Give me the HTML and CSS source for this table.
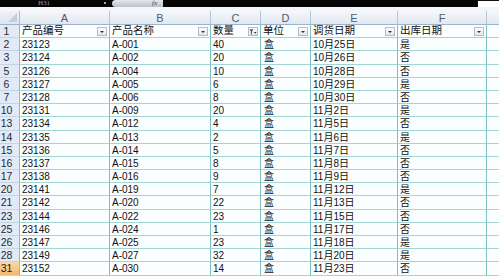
FILE: index.html
```html
<!DOCTYPE html>
<html lang="zh-CN">
<head>
<meta charset="utf-8">
<title>Sheet</title>
<link rel="stylesheet" href="styles.css">
</head>
<body>
<div class="topbar">
  <div class="bar-main">
    <span class="namebox">H31</span>
    <span class="dot"></span>
    <span class="fxpill"><span class="fx">fx</span></span>
  </div>
  <div class="bar-end"></div>
</div>
<div class="gap"></div>
<div class="sheet">
  <div class="corner"></div>
  <div class="ch">A</div><div class="ch">B</div><div class="ch">C</div><div class="ch">D</div><div class="ch">E</div><div class="ch">F</div><div class="ch last"></div>

  <div class="rh">1</div>
  <div class="c hd"><span>产品编号</span><span class="dd"></span></div>
  <div class="c hd"><span>产品名称</span><span class="dd"></span></div>
  <div class="c hd"><span>数量</span><span class="dd flt"><svg width="9" height="8" viewBox="0 0 9 8"><path d="M0.5 1 H5 L3.3 3.4 V6.5 L2.2 7 V3.4 Z" fill="#3a5a8c"/><path d="M5.5 4 H8.5 L7 5.8 Z" fill="#222"/></svg></span></div>
  <div class="c hd"><span>单位</span><span class="dd"></span></div>
  <div class="c hd"><span>调货日期</span><span class="dd"></span></div>
  <div class="c hd"><span>出库日期</span><span class="dd"></span></div>
  <div class="c last"></div>

  <div class="rh">2</div><div class="c">23123</div><div class="c">A-001</div><div class="c">40</div><div class="c u">盒</div><div class="c">10月25日</div><div class="c">是</div><div class="c last"></div>
  <div class="rh">3</div><div class="c">23124</div><div class="c">A-002</div><div class="c">20</div><div class="c u">盒</div><div class="c">10月26日</div><div class="c">否</div><div class="c last"></div>
  <div class="rh">5</div><div class="c">23126</div><div class="c">A-004</div><div class="c">10</div><div class="c u">盒</div><div class="c">10月28日</div><div class="c">否</div><div class="c last"></div>
  <div class="rh">6</div><div class="c">23127</div><div class="c">A-005</div><div class="c">6</div><div class="c u">盒</div><div class="c">10月29日</div><div class="c">是</div><div class="c last"></div>
  <div class="rh">7</div><div class="c">23128</div><div class="c">A-006</div><div class="c">8</div><div class="c u">盒</div><div class="c">10月30日</div><div class="c">否</div><div class="c last"></div>
  <div class="rh">10</div><div class="c">23131</div><div class="c">A-009</div><div class="c">20</div><div class="c u">盒</div><div class="c">11月2日</div><div class="c">是</div><div class="c last"></div>
  <div class="rh">13</div><div class="c">23134</div><div class="c">A-012</div><div class="c">4</div><div class="c u">盒</div><div class="c">11月5日</div><div class="c">否</div><div class="c last"></div>
  <div class="rh">14</div><div class="c">23135</div><div class="c">A-013</div><div class="c">2</div><div class="c u">盒</div><div class="c">11月6日</div><div class="c">是</div><div class="c last"></div>
  <div class="rh">15</div><div class="c">23136</div><div class="c">A-014</div><div class="c">5</div><div class="c u">盒</div><div class="c">11月7日</div><div class="c">否</div><div class="c last"></div>
  <div class="rh">16</div><div class="c">23137</div><div class="c">A-015</div><div class="c">8</div><div class="c u">盒</div><div class="c">11月8日</div><div class="c">否</div><div class="c last"></div>
  <div class="rh">17</div><div class="c">23138</div><div class="c">A-016</div><div class="c">9</div><div class="c u">盒</div><div class="c">11月9日</div><div class="c">否</div><div class="c last"></div>
  <div class="rh">20</div><div class="c">23141</div><div class="c">A-019</div><div class="c">7</div><div class="c u">盒</div><div class="c">11月12日</div><div class="c">是</div><div class="c last"></div>
  <div class="rh">21</div><div class="c">23142</div><div class="c">A-020</div><div class="c">22</div><div class="c u">盒</div><div class="c">11月13日</div><div class="c">否</div><div class="c last"></div>
  <div class="rh">23</div><div class="c">23144</div><div class="c">A-022</div><div class="c">23</div><div class="c u">盒</div><div class="c">11月15日</div><div class="c">否</div><div class="c last"></div>
  <div class="rh">25</div><div class="c">23146</div><div class="c">A-024</div><div class="c">1</div><div class="c u">盒</div><div class="c">11月17日</div><div class="c">否</div><div class="c last"></div>
  <div class="rh">26</div><div class="c">23147</div><div class="c">A-025</div><div class="c">23</div><div class="c u">盒</div><div class="c">11月18日</div><div class="c">是</div><div class="c last"></div>
  <div class="rh">28</div><div class="c">23149</div><div class="c">A-027</div><div class="c">32</div><div class="c u">盒</div><div class="c">11月20日</div><div class="c">是</div><div class="c last"></div>
  <div class="rh active">31</div><div class="c">23152</div><div class="c">A-030</div><div class="c">14</div><div class="c u">盒</div><div class="c">11月23日</div><div class="c">否</div><div class="c last"></div>
</div>
</body>
</html>
```
FILE: styles.css
```css
html, body {
  margin: 0;
  padding: 0;
}
body {
  width: 499px;
  height: 278px;
  overflow: hidden;
  background: #fff;
  font-family: "Liberation Sans", "Noto Sans CJK SC", sans-serif;
  color: #111;
}

.topbar {
  display: flex;
  height: 7px;
}
.bar-main {
  flex: 1;
  background: #050505;
  display: flex;
  align-items: flex-start;
  overflow: hidden;
}
.namebox {
  margin-left: 38px;
  width: 59px;
  font-size: 7px;
  line-height: 7px;
  color: #9a9a9a;
  font-family: "Liberation Serif", serif;
}
.dot {
  width: 2px;
  height: 2px;
  margin-top: 2px;
  margin-left: 7px;
  background: #ddd;
  border-radius: 1px;
}
.fxpill {
  margin-left: 6px;
  width: 51px;
  height: 7px;
  border-radius: 5px 0 0 5px;
  background: linear-gradient(#e4e8ec, #b9c1ca);
  display: flex;
  justify-content: flex-end;
  overflow: hidden;
}
.fx {
  font-family: "Liberation Serif", serif;
  font-style: italic;
  font-size: 7px;
  line-height: 7px;
  margin-right: 6px;
  color: #444;
}
.bar-end {
  width: 22px;
  height: 7px;
  box-sizing: border-box;
  background: #fff;
  border-top: 1px solid #111;
  border-left: 1px solid #111;
}
.gap {
  height: 4px;
  background: #f4f6f9;
}

.sheet {
  display: grid;
  grid-template-columns: 20px 90px 101px 50px 50px 87px 89px 12px;
  grid-template-rows: 14px repeat(19, 13.2px);
}

.corner {
  box-sizing: border-box;
  background: linear-gradient(#eef2f7, #dfe6ee);
  border-right: 1px solid #a9bbcf;
  border-bottom: 1px solid #9fb3c8;
  display: flex;
  justify-content: flex-end;
  align-items: flex-end;
  padding: 0 2px 2px 0;
}
.corner::after {
  content: "";
  width: 0;
  height: 0;
  border-left: 9px solid transparent;
  border-bottom: 9px solid #c4ced9;
}

.ch {
  box-sizing: border-box;
  background: linear-gradient(#f5f8fb, #e1e8f0);
  border-right: 1px solid #b5c5d6;
  border-bottom: 1px solid #9fb3c8;
  font-size: 11px;
  line-height: 14px;
  color: #505c6a;
  text-align: center;
}

.rh {
  box-sizing: border-box;
  background: #e2eaf5;
  border-right: 1px solid #9fb3c8;
  border-bottom: 1px solid #c6d3e2;
  font-size: 10.5px;
  line-height: 13px;
  color: #1e2b40;
  text-align: center;
  padding-right: 6px;
}
.rh.active {
  background: linear-gradient(#fbd9a6, #f4b76c);
  color: #222;
}

.c {
  box-sizing: border-box;
  background: #fbfefe;
  border-right: 1px solid #7fbfc0;
  border-bottom: 1px solid #a3d5d5;
  font-size: 10px;
  line-height: 13px;
  padding-left: 2px;
  white-space: nowrap;
  overflow: hidden;
}
.c.u {
  padding-left: 3px;
}
.c.last,
.ch.last {
  border-right: none;
}

.hd {
  display: flex;
  justify-content: space-between;
  align-items: flex-end;
  padding-right: 2px;
}
.hd span:first-child {
  line-height: 13px;
  font-size: 10.5px;
}
.dd {
  width: 10px;
  height: 9px;
  margin-bottom: 1px;
  box-sizing: border-box;
  border: 1px solid #b3bdc9;
  background: linear-gradient(#fdfdfe, #e1e6eb);
  display: flex;
  justify-content: center;
  align-items: center;
}
.dd::after {
  content: "";
  width: 0;
  height: 0;
  border-left: 2px solid transparent;
  border-right: 2px solid transparent;
  border-top: 2px solid #333;
}
.dd.flt::after {
  content: none;
}
.dd.flt svg {
  display: block;
}
```
